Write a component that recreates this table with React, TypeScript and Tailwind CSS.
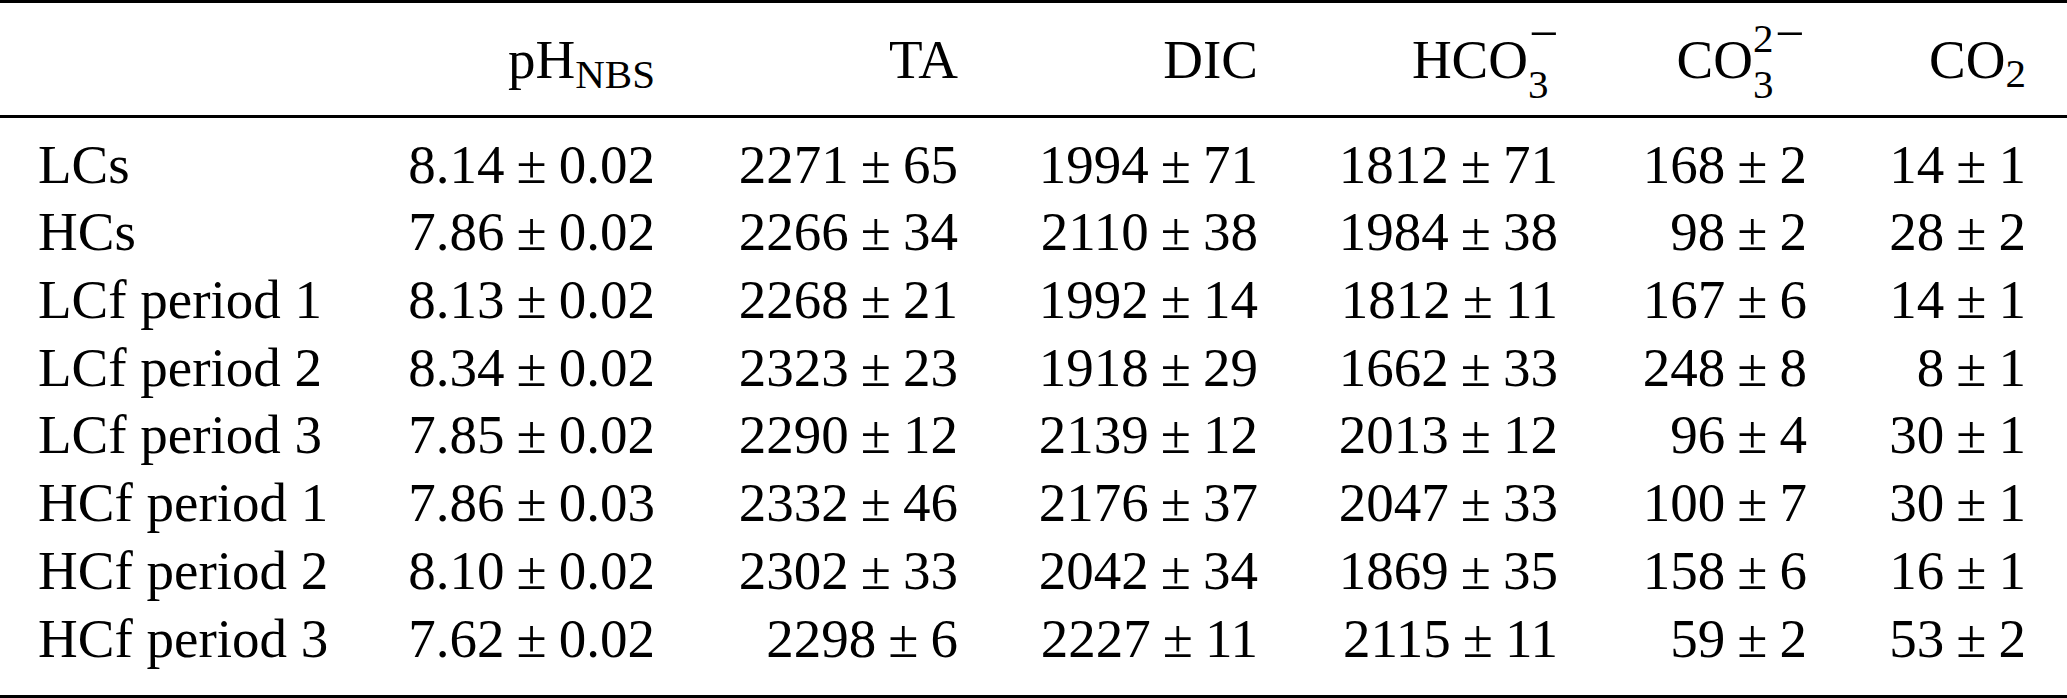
const rows: [string, string[]][] = [
  ["LCs", ["8.14±0.02", "2271±65", "1994±71", "1812±71", "168±2", "14±1"]],
  ["HCs", ["7.86±0.02", "2266±34", "2110±38", "1984±38", "98±2", "28±2"]],
  ["LCf period 1", ["8.13±0.02", "2268±21", "1992±14", "1812±11", "167±6", "14±1"]],
  ["LCf period 2", ["8.34±0.02", "2323±23", "1918±29", "1662±33", "248±8", "8±1"]],
  ["LCf period 3", ["7.85±0.02", "2290±12", "2139±12", "2013±12", "96±4", "30±1"]],
  ["HCf period 1", ["7.86±0.03", "2332±46", "2176±37", "2047±33", "100±7", "30±1"]],
  ["HCf period 2", ["8.10±0.02", "2302±33", "2042±34", "1869±35", "158±6", "16±1"]],
  ["HCf period 3", ["7.62±0.02", "2298±6", "2227±11", "2115±11", "59±2", "53±2"]],
];

const cols = "grid grid-cols-[283px_334px_303px_300px_300px_249px_219px] pl-[38px] pr-[41px]";

function Pm({ v }: { v: string }) {
  const [a, b] = v.split("±");
  return (
    <>
      {a}
      <span className="mx-[12px]">±</span>
      {b}
    </>
  );
}

// sub/sup stacked like TeX's X_3^{2-}
function Stack({ sup, sub, w, minusLeft }: { sup?: string; sub: string; w: string; minusLeft: string }) {
  return (
    <span className={`relative inline-block text-[41px] leading-none ${w}`}>
      <span className="invisible">{sub}</span>
      <span className="absolute left-0 top-[20px]">{sub}</span>
      {sup && <span className="absolute left-0 top-[-26px]">{sup}</span>}
      <span className={`absolute top-[-36px] text-[52px] leading-none ${minusLeft}`}>−</span>
    </span>
  );
}

export default function App() {
  return (
    <div className="w-[2067px] bg-white text-black font-['Liberation_Serif','Times_New_Roman',serif] text-[55px] leading-[67.7px]">
      <div className="border-t-[3px] border-black" />
      <div className={`${cols} pt-[22.6px] pb-[21.7px] border-b-[3px] border-black`}>
        <div />
        <div className="text-right">
          pH<span className="relative top-[10px] text-[41px] leading-none">NBS</span>
        </div>
        <div className="text-right">TA</div>
        <div className="text-right">DIC</div>
        <div className="text-right">
          HCO
          <Stack sub="3" w="w-[30px]" minusLeft="left-[1px]" />
        </div>
        <div className="text-right">
          CO
          <Stack sub="3" sup="2" w="w-[54px]" minusLeft="left-[22px]" />
        </div>
        <div className="text-right">
          CO<span className="relative top-[9px] text-[41px] leading-none">2</span>
        </div>
      </div>
      <div className={`${cols} pt-[12.6px] pb-[22.8px] border-b-[3px] border-black`}>
        {rows.map(([label, vals]) => (
          <div key={label} className="contents">
            <div className="whitespace-nowrap">{label}</div>
            {vals.map((v, i) => (
              <div key={i} className="text-right whitespace-nowrap">
                <Pm v={v} />
              </div>
            ))}
          </div>
        ))}
      </div>
    </div>
  );
}
